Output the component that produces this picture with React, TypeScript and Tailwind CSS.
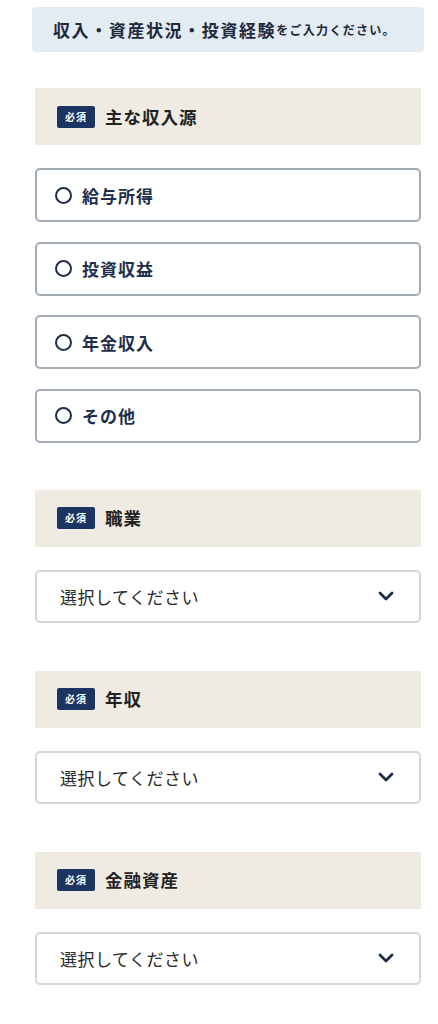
import React from "react";

const font = { fontFamily: '"Noto Sans CJK JP", "Noto Sans", sans-serif' };

function Badge() {
  return (
    <span className="flex h-[22px] w-[38px] items-center justify-center rounded-[2px] bg-[#1b3461] text-[10px] font-bold leading-none tracking-[1px] text-white">
      必須
    </span>
  );
}

function Header({ label }: { label: string }) {
  return (
    <div className="flex h-[57px] items-center gap-[10px] bg-[#efebe3] pl-[22px]">
      <Badge />
      <span className="text-[17.5px] font-bold leading-none tracking-[1px] text-[#222222]">{label}</span>
    </div>
  );
}

function Radio({ label }: { label: string }) {
  return (
    <div className="flex h-[54px] items-center gap-[10px] rounded-[5px] border-2 border-[#a3abb7] bg-white pl-[18px]">
      <span className="h-[17px] w-[17px] rounded-full border-[2.5px] border-[#1d2d48]" />
      <span className="text-[17px] font-bold leading-none tracking-[1px] text-[#1e2f4d]">{label}</span>
    </div>
  );
}

function Select() {
  return (
    <div className="flex h-[53px] items-center justify-between rounded-[5px] border-2 border-[#d3d7dd] bg-white pl-[23px] pr-[25px]">
      <span className="text-[17px] leading-none tracking-[0.5px] text-[#2a2a2a]">選択してください</span>
      <svg width="16" height="10" viewBox="0 0 16 10" fill="none">
        <path d="M2 2l6 6 6-6" stroke="#1d2d48" strokeWidth="2.8" strokeLinecap="round" strokeLinejoin="round" />
      </svg>
    </div>
  );
}

export default function App() {
  return (
    <div className="min-h-[1024px] w-[438px] bg-white pb-10" style={font}>
      <div className="ml-[32px] mt-[7px] flex h-[45px] w-[392px] items-center rounded-[4px] bg-[#e3ebf3] pl-[21px]">
        <span className="text-[17px] font-bold leading-none tracking-[1.6px] text-[#1f2a3c]">
          収入・資産状況・投資経験
        </span>
        <span className="text-[12px] font-bold leading-none tracking-[1.3px] text-[#1f2a3c]">をご入力ください。</span>
      </div>

      <div className="ml-[35px] mt-[36px] flex w-[386px] flex-col">
        <Header label="主な収入源" />
        <div className="mt-[23px] flex flex-col gap-[19.5px]">
          <Radio label="給与所得" />
          <Radio label="投資収益" />
          <Radio label="年金収入" />
          <Radio label="その他" />
        </div>

        <div className="mt-[47px]">
          <Header label="職業" />
        </div>
        <div className="mt-[23px]">
          <Select />
        </div>

        <div className="mt-[48px]">
          <Header label="年収" />
        </div>
        <div className="mt-[23px]">
          <Select />
        </div>

        <div className="mt-[48px]">
          <Header label="金融資産" />
        </div>
        <div className="mt-[23px]">
          <Select />
        </div>
      </div>
    </div>
  );
}
